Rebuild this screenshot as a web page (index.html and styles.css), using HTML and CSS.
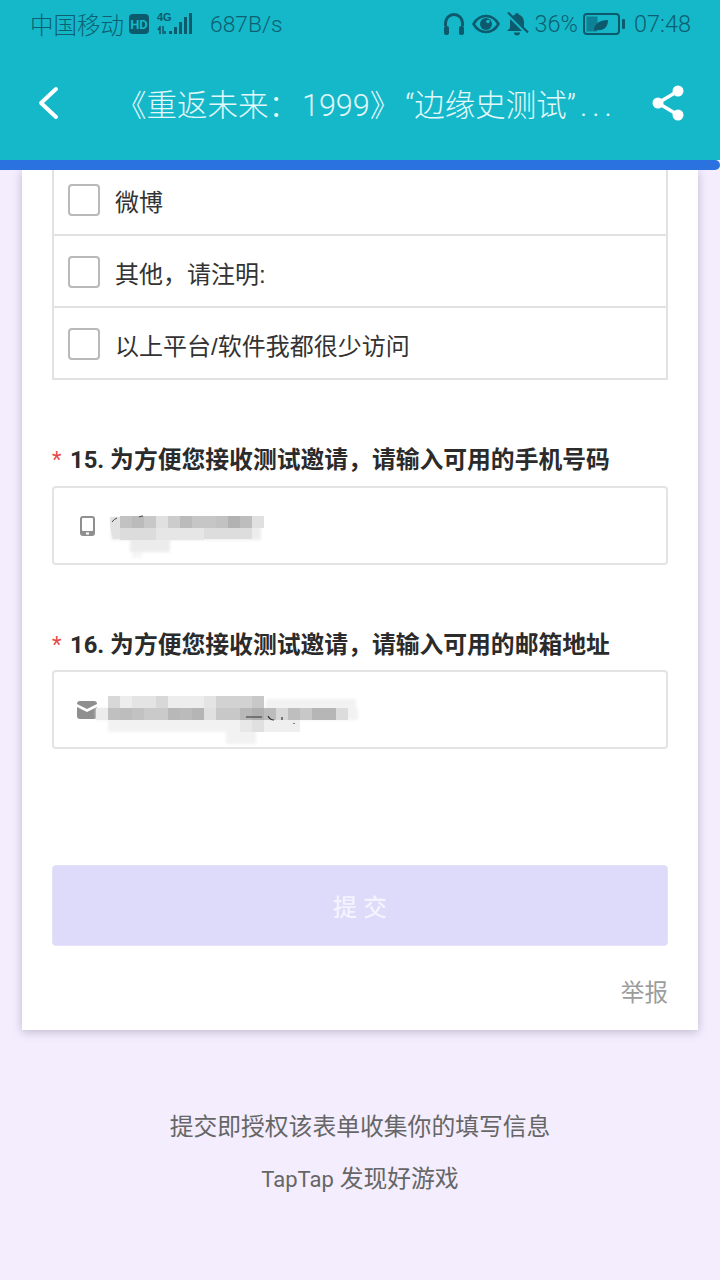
FILE: index.html
```html
<!DOCTYPE html>
<html lang="zh-CN">
<head>
<meta charset="utf-8">
<title>TapTap 表单</title>
<link rel="stylesheet" href="styles.css">
</head>
<body>
<svg class="defs" width="0" height="0"><defs><filter id="soft" x="-10%" y="-30%" width="120%" height="160%"><feGaussianBlur stdDeviation="1.500"/></filter></defs></svg>
<header class="head">
  <div class="status">
    <div class="status-side">
      <span>中国移动</span>
      <span class="hd">HD</span>
      <svg class="sig" width="36" height="24" viewBox="0 0 36 24"><text x="0" y="9" class="sig-t">4G</text><path d="M3 14v8M1 18l2-3M6 14v8M8 22v-3" stroke="#0d5a6c" stroke-width="1.600" fill="none"/><path d="M12 19h3v3h-3zM17 15h3v7h-3zM22 10h3v12h-3zM27 5h3v17h-3zM32 1h3v21h-3z" fill="#0d5a6c"/></svg>
      <span class="speed">687B/s</span>
    </div>
    <div class="status-side right">
      <svg width="24" height="24" viewBox="0 0 24 24"><path d="M3.500 14V11a8.500 8.500 0 0 1 17 0v3" fill="none" stroke="#0d5a6c" stroke-width="3"/><rect x="2" y="14" width="5" height="9" rx="2" fill="#0d5a6c"/><rect x="17" y="14" width="5" height="9" rx="2" fill="#0d5a6c"/></svg>
      <svg class="ml-eye" width="28" height="24" viewBox="0 0 28 24"><path d="M1.500 12C5 6 9 4 14 4s9 2 12.500 8C23 18 19 20 14 20S5 18 1.500 12z" fill="none" stroke="#0d5a6c" stroke-width="2.500"/><circle cx="14" cy="12" r="6" fill="#0d5a6c"/><circle cx="16" cy="9.500" r="1.800" fill="#14b8c9"/></svg>
      <svg class="ml-bell" width="24" height="24" viewBox="0 0 24 24"><path d="M12 1c1 0 2 .8 2 1.800C17.500 3.800 19 7 19 11v5l3 3H2l3-3v-5c0-4 1.500-7.200 5-8.200C10 1.800 11 1 12 1z" fill="#0d5a6c"/><path d="M9 20.500h6a3 3 0 0 1-6 0z" fill="#0d5a6c"/><path d="M2 1l21 21" stroke="#14b8c9" stroke-width="4"/><path d="M3 .5l20 20" stroke="#0d5a6c" stroke-width="2.200"/></svg>
      <span class="pct">36%</span>
      <svg class="batt" width="42" height="24" viewBox="0 0 42 24"><rect x="1" y="2" width="35" height="20" rx="3" fill="none" stroke="#0d5a6c" stroke-width="2"/><rect x="3.500" y="4.500" width="11" height="15" fill="#0d8296"/><path d="M11 19c0-7 5-11 14-11 0 7-4 11-11 10l-3 1z" fill="#0d5a6c"/><rect x="39" y="7" width="3" height="10" rx="1" fill="#0d5a6c"/></svg>
      <span class="clock">07:48</span>
    </div>
  </div>
  <div class="nav">
    <svg class="back" width="24" height="36" viewBox="0 0 24 36"><path d="M19 4L4 18l15 14" fill="none" stroke="#fff" stroke-width="4" stroke-linecap="round" stroke-linejoin="round"/></svg>
    <h1 class="title">《重返未来&#xFF1A;<span class="t-num">1999</span>》<span class="t-quote">“边缘史测试”</span><span class="t-dots">...</span></h1>
    <svg class="share" width="36" height="38" viewBox="0 0 36 38"><path d="M27 7L7 19l20 12" fill="none" stroke="#fff" stroke-width="3.500"/><circle cx="27" cy="7" r="5.500" fill="#fff"/><circle cx="7" cy="19" r="5.500" fill="#fff"/><circle cx="27" cy="31" r="5.500" fill="#fff"/></svg>
  </div>
</header>
<div class="progress"></div>

<main class="card">
  <div class="options">
    <div class="opt first"><span class="check"></span><span>微博</span></div>
    <div class="opt"><span class="check"></span><span>其他&#xFF0C;请注明:</span></div>
    <div class="opt"><span class="check"></span><span>以上平台/软件我都很少访问</span></div>
  </div>

  <div class="q q15"><span class="req">*</span><span class="q-text">15. 为方便您接收测试邀请&#xFF0C;请输入可用的手机号码</span></div>
  <div class="field">
    <svg class="ficon" width="17" height="22" viewBox="0 0 17 22"><rect x="1" y="1" width="15" height="20" rx="3" fill="#8f8f8f"/><rect x="3" y="3" width="11" height="13" rx="1" fill="#fff"/><rect x="7" y="17.500" width="3" height="2" fill="#fff"/></svg>
    <svg class="mosaic one" width="170" height="46" viewBox="0 0 170 46">
      <g filter="url(#soft)"><path d="M3 2h150v22H3zM22 24h40v12H22z" fill="#ececec"/><path d="M24 36h10v6H24z" fill="#f6f6f6"/></g>
      <path d="M2 1h10v22H5q-3-8-3-22z" fill="#e2e2e2"/>
      <path d="M12 0h12v12H12z" fill="#c2c2c2"/><path d="M24 0h12v12H24z" fill="#bbb"/><path d="M36 0h12v12H36z" fill="#c8c8c8"/><path d="M48 0h12v12H48z" fill="#e0e0e0"/><path d="M60 0h12v12H60z" fill="#ccc"/><path d="M72 0h12v12H72z" fill="#bbb"/><path d="M84 0h24v12H84z" fill="#c6c6c6"/><path d="M108 0h12v12h-12z" fill="#c2c2c2"/><path d="M120 0h12v12h-12z" fill="#b2b2b2"/><path d="M132 0h12v12h-12z" fill="#bdbdbd"/><path d="M144 0h12v12h-12z" fill="#e0e0e0"/>
      <path d="M12 12h36v12H12z" fill="#dcdcdc"/><path d="M48 12h48v12H48z" fill="#e6e6e6"/><path d="M96 12h48v11H96z" fill="#ddd"/>
      <path d="M4 6q2-3 5-4M31 1q2-1 4-1" stroke="#444" stroke-width="1" fill="none"/>
    </svg>
  </div>

  <div class="q q16"><span class="req">*</span><span class="q-text">16. 为方便您接收测试邀请&#xFF0C;请输入可用的邮箱地址</span></div>
  <div class="field">
    <svg class="ficon mail" width="22" height="20" viewBox="0 0 22 20"><path d="M1 4c0-2 1-3 3-3h14c2 0 3 1 3 3L11 9z" fill="#8f8f8f"/><path d="M1 7l10 5 10-5v9c0 2-1 3-3 3H4c-2 0-3-1-3-3z" fill="#8f8f8f"/></svg>
    <svg class="mosaic two" width="270" height="56" viewBox="0 0 270 56">
      <g filter="url(#soft)"><path d="M0 12h262v12H160v24h-30v-12H12V24H0zM170 3h90v9h-90z" fill="#f2f2f2"/></g>
      <path d="M12 0h12v12H12zM60 0h12v12H60z" fill="#d8d8d8"/><path d="M24 0h12v12H24zM72 0h36v12H72z" fill="#ededed"/><path d="M36 0h24v12H36zM108 0h12v12h-12z" fill="#e4e4e4"/><path d="M120 0h24v12h-24zM144 0h12v12h-12z" fill="#d2d2d2"/><path d="M156 0h12v12h-12z" fill="#c8c8c8"/>
      <path d="M0 12h12v12H0z" fill="#ececec"/><path d="M12 12h12v12H12z" fill="#c0c0c0"/><path d="M24 12h12v12H24z" fill="#bdbdbd"/><path d="M36 12h12v12H36z" fill="#c2c2c2"/><path d="M48 12h24v12H48z" fill="#cacaca"/><path d="M72 12h12v12H72z" fill="#b8b8b8"/><path d="M84 12h12v12H84z" fill="#bbb"/><path d="M96 12h12v12H96z" fill="#b5b5b5"/><path d="M108 12h12v12h-12z" fill="#e0e0e0"/><path d="M120 12h24v12h-24z" fill="#c8c8c8"/><path d="M144 12h12v12h-12z" fill="#b8b8b8"/><path d="M156 12h12v12h-12z" fill="#b0b0b0"/><path d="M168 12h12v12h-12z" fill="#bcbcbc"/><path d="M180 12h12v12h-12z" fill="#d8d8d8"/><path d="M192 12h12v12h-12z" fill="#bebebe"/><path d="M204 12h12v12h-12z" fill="#c8c8c8"/><path d="M216 12h24v12h-24z" fill="#b6b6b6"/><path d="M240 12h12v12h-12z" fill="#dcdcdc"/>
      <path d="M144 24h12v12h-12z" fill="#e8e8e8"/><path d="M156 24h12v12h-12z" fill="#e0e0e0"/><path d="M168 24h36v12h-36z" fill="#efefef"/>
      <path d="M150 21h16M172 20q2 4 6 4M186 21v3M198 27v1" stroke="#333" stroke-width="1.200" fill="none"/>
    </svg>
  </div>

  <button class="submit" type="button">提 交</button>
  <div class="report">举报</div>
</main>

<footer class="foot">
  <p>提交即授权该表单收集你的填写信息</p>
  <p><span class="brand">TapTap</span> 发现好游戏</p>
</footer>
</body>
</html>
```
FILE: styles.css
```css
* { box-sizing: border-box; }
html, body { margin: 0; padding: 0; }
body {
  width: 720px;
  height: 1280px;
  overflow: hidden;
  background: #f3edfd;
  font-family: Roboto, "Noto Sans CJK SC", "Noto Sans", sans-serif;
  color: #333;
}
.defs { position: absolute; }
.head { height: 160px; background: #14b8c9; }
.status {
  height: 48px;
  margin-bottom: 2px;
  padding: 0 29px 0 30px;
  display: flex;
  justify-content: space-between;
  align-items: center;
  font-size: 23.500px;
  color: #0d5f71;
  font-weight: 300;
}
.status-side { display: flex; align-items: center; }
.hd {
  width: 20px; height: 20px; margin-left: 5px;
  border-radius: 4px;
  background: #0d5a6c;
  color: #14b8c9;
  font-size: 13px; font-weight: 700;
  display: flex; align-items: center; justify-content: center;
}
.sig { margin-left: 8px; }
.sig-t { font: 700 11px "Liberation Sans", sans-serif; fill: #0d5a6c; }
.speed { margin-left: 17px; font-size: 22.800px; }
.ml-eye { margin-left: 6px; }
.ml-bell { margin-left: 5px; }
.pct { margin-left: 5px; }
.batt { margin-left: 5px; }
.clock { margin-left: 9px; }
.nav {
  height: 110px;
  padding: 0 33px 5px 37px;
  display: flex;
  align-items: center;
}
.back { flex: none; }
.title {
  flex: 1;
  margin: 0;
  padding-left: 55px;
  font-size: 30.500px;
  font-weight: 300;
  color: #e4f8fb;
  white-space: nowrap;
  overflow: hidden;
}
.t-num { margin-left: 3px; }
.t-quote { margin-left: 5px; }
.t-dots { margin-left: 4px; letter-spacing: 5px; }
.share { flex: none; }
.progress {
  position: relative;
  z-index: 2;
  height: 10px;
  background: #2a72e0;
  border-radius: 0 5px 5px 0;
}
.card {
  width: 676px;
  height: 860px;
  margin-left: 22px;
  padding: 0 30px;
  background: #fff;
  box-shadow: 0 2px 9px rgba(60, 50, 90, .28);
  display: flex;
  flex-direction: column;
}
.options {
  border: 2px solid #e2e2e2;
  border-top: 0;
  border-bottom: 0;
}
.opt {
  height: 72px;
  padding: 20px 0 18px 14px;
  border-bottom: 2px solid #e2e2e2;
  display: flex;
  align-items: center;
  gap: 15px;
  font-family: "Liberation Sans", "Noto Sans CJK SC", sans-serif;
  font-size: 24px;
  color: #333;
}
.opt.first { height: 66px; padding-top: 14px; }
.check {
  flex: none;
  width: 32px; height: 32px;
  border: 2px solid #b9b9b9;
  border-radius: 4px;
  background: #fff;
}
.q {
  display: flex;
  align-items: center;
  margin-top: 64px;
  font-size: 23.800px;
  font-weight: 700;
  color: #2b2b2b;
  line-height: 32px;
}
.q16 { margin-bottom: -1px; }
.req { width: 18px; color: #e64b4b; font-weight: 400; font-size: 22px; }
.q-text { white-space: nowrap; }
.field {
  position: relative;
  height: 79px;
  margin-top: 10px;
  border: 2px solid #e4e4e4;
  border-radius: 4px;
  padding-left: 25px;
  display: flex;
  align-items: center;
}
.ficon { flex: none; }
.mail { margin-left: -3px; }
.mosaic { position: absolute; overflow: visible; }
.mosaic.one { left: 54px; top: 28px; }
.mosaic.two { left: 42px; top: 24px; }
.submit {
  height: 81px;
  margin-top: 116px;
  border: 1px solid #e4e1f8;
  border-radius: 4px;
  background: #dddafa;
  color: #f4f3fe;
  font: 500 24px Roboto, "Noto Sans CJK SC", sans-serif;
}
.report {
  margin-top: 30px;
  text-align: right;
  font-size: 23.600px;
  line-height: 34px;
  color: #9c9c9c;
}
.foot {
  padding-top: 80px;
  text-align: center;
  font-size: 23.800px;
  color: #666;
}
.foot p { margin: 0 0 17px; line-height: 34px; }
.foot p + p { padding-top: 1px; }
.brand { font-size: 22px; }
```
